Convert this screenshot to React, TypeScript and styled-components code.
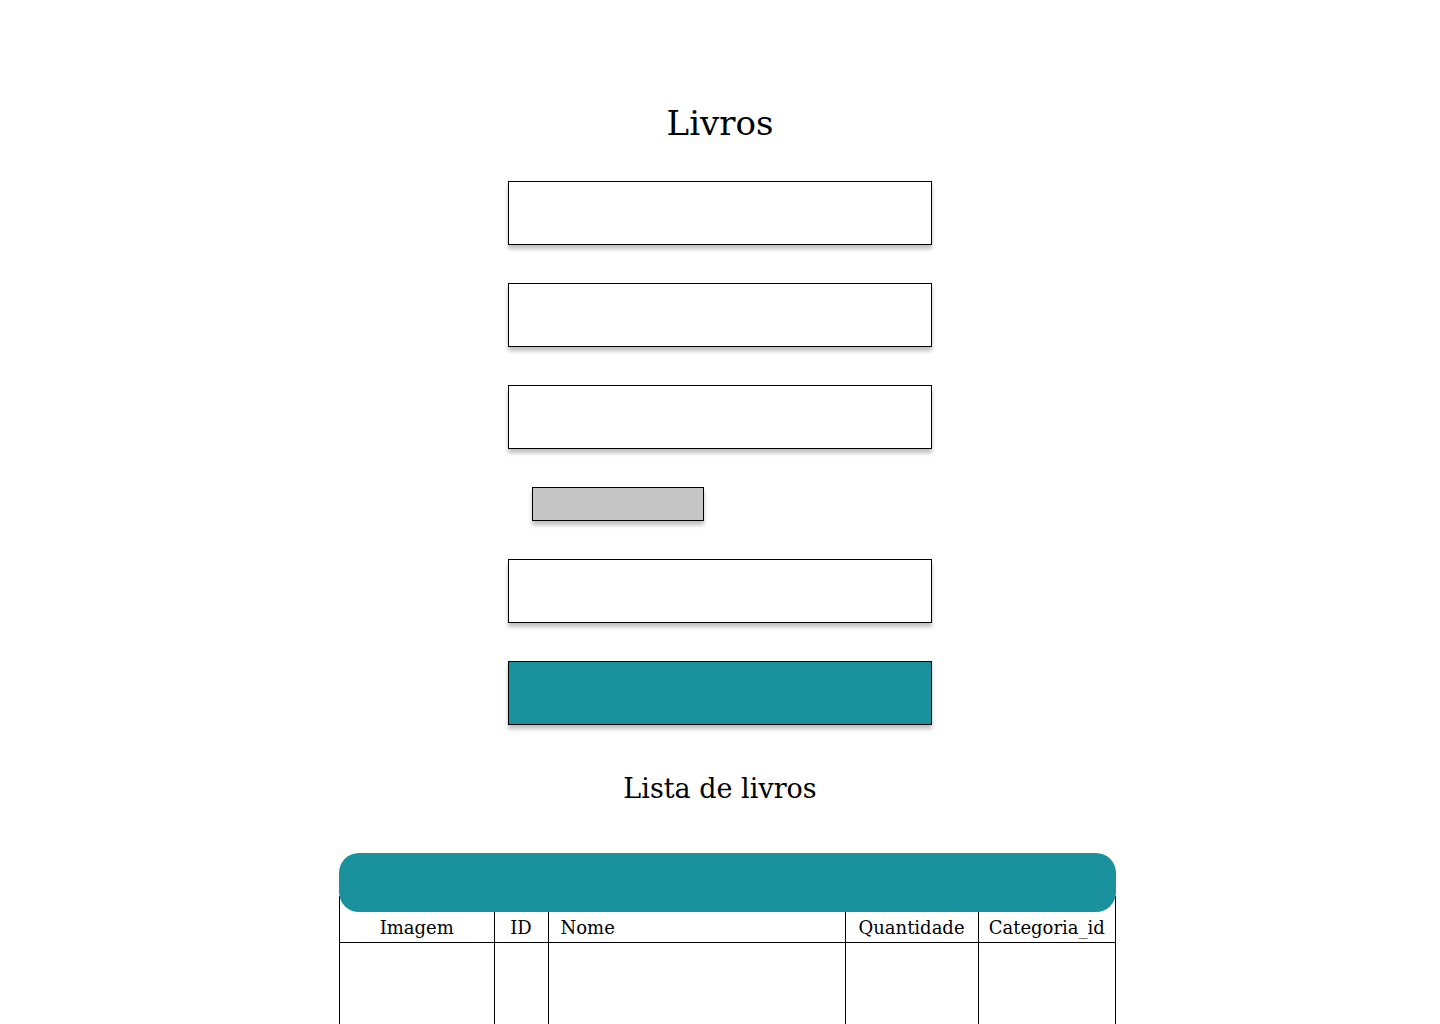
import styled, { createGlobalStyle } from "styled-components"

const GlobalStyle = createGlobalStyle`
  html, body {
    margin: 0;
    padding: 0;
    background: #fff;
  }
  body {
    font-family: "DejaVu Serif", "Liberation Serif", serif;
    color: #000;
  }
`

const Page = styled.main`
  padding-top: 103px;
  display: flex;
  flex-direction: column;
  align-items: center;
`

const Title = styled.h1`
  margin: 0 0 38px;
  font-size: 34px;
  line-height: 40px;
  font-weight: 400;
  text-align: center;
`

const Form = styled.form`
  width: 424px;
  display: flex;
  flex-direction: column;
  gap: 38px;
`

const Field = styled.input`
  box-sizing: border-box;
  width: 100%;
  height: 64px;
  margin: 0;
  border: 1px solid #000;
  background: #fff;
  box-shadow: 0 4px 4px rgba(0, 0, 0, 0.25);
  outline: none;
`

const FileButton = styled.button`
  box-sizing: border-box;
  width: 172px;
  height: 34px;
  margin-left: 24px;
  border: 1px solid #000;
  background: #c6c6c6;
  box-shadow: 0 4px 4px rgba(0, 0, 0, 0.25);
`

const Submit = styled.button`
  box-sizing: border-box;
  width: 100%;
  height: 64px;
  border: 1px solid #000;
  background: #1a929d;
  box-shadow: 0 4px 4px rgba(0, 0, 0, 0.25);
`

const SubTitle = styled.h2`
  margin: 48px 0 48px;
  font-size: 27px;
  line-height: 32px;
  font-weight: 400;
  text-align: center;
`

const TableCard = styled.section`
  align-self: flex-start;
  width: 777px;
  margin-left: calc(50% - 381px);
`

const Banner = styled.div`
  position: relative;
  z-index: 1;
  height: 59px;
  margin-bottom: -16px;
  border-radius: 20px;
  background: #1a929d;
`

const Frame = styled.div`
  border-left: 1px solid #000;
  border-right: 1px solid #000;
  padding-top: 16px;
`

const Grid = styled.table`
  width: 100%;
  table-layout: fixed;
  border-collapse: collapse;
`

const Head = styled.th<{ $align?: string; $last?: boolean }>`
  box-sizing: border-box;
  height: 30px;
  padding: 5px ${({ $align }) => ($align === "left" ? "12px" : "0")} 3px;
  font-size: 18px;
  line-height: 21px;
  font-weight: 400;
  text-align: ${({ $align }) => $align || "center"};
  border-bottom: 1px solid #000;
  border-right: ${({ $last }) => ($last ? "none" : "1px solid #000")};
  white-space: nowrap;
`

const Cell = styled.td<{ $last?: boolean }>`
  height: 120px;
  padding: 0;
  border-right: ${({ $last }) => ($last ? "none" : "1px solid #000")};
`

const columns = [
  { label: "Imagem", width: 154 },
  { label: "ID", width: 54 },
  { label: "Nome", width: 297, align: "left" },
  { label: "Quantidade", width: 133 },
  { label: "Categoria_id", width: 137 },
]

const App = () => {
  return (
    <>
      <GlobalStyle />
      <Page>
        <Title>Livros</Title>
        <Form onSubmit={(e) => e.preventDefault()}>
          <Field type="text" />
          <Field type="text" />
          <Field type="text" />
          <FileButton type="button" />
          <Field type="text" />
          <Submit type="submit" />
        </Form>
        <SubTitle>Lista de livros</SubTitle>
        <TableCard>
          <Banner />
          <Frame>
            <Grid>
              <colgroup>
                {columns.map((c) => (
                  <col key={c.label} style={{ width: c.width }} />
                ))}
              </colgroup>
              <thead>
                <tr>
                  {columns.map((c, i) => (
                    <Head key={c.label} $align={c.align} $last={i === columns.length - 1}>
                      {c.label}
                    </Head>
                  ))}
                </tr>
              </thead>
              <tbody>
                <tr>
                  {columns.map((c, i) => (
                    <Cell key={c.label} $last={i === columns.length - 1} />
                  ))}
                </tr>
              </tbody>
            </Grid>
          </Frame>
        </TableCard>
      </Page>
    </>
  )
}

export default App
